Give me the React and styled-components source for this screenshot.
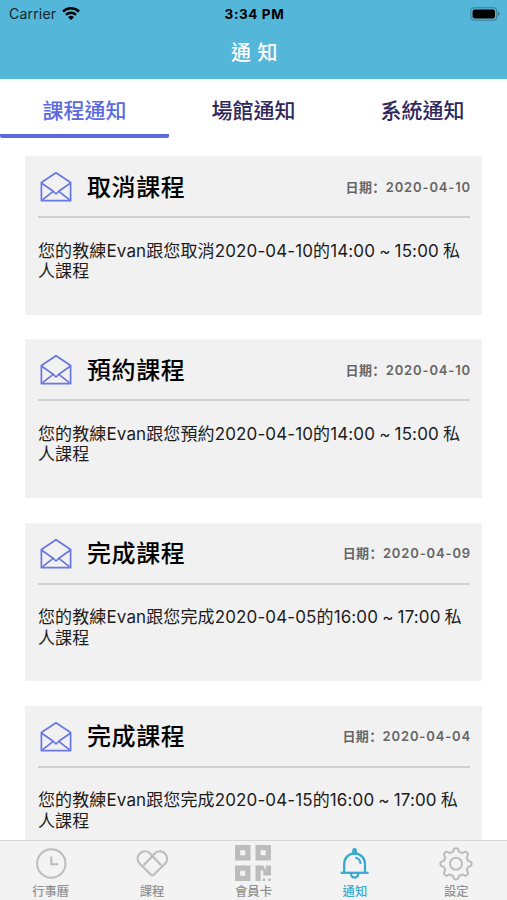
import styled, { createGlobalStyle } from "styled-components"

const GlobalStyle = createGlobalStyle`
  * {
    box-sizing: border-box;
  }

  body {
    margin: 0;
    background: #fff;
    font-family: Inter, "Noto Sans CJK TC", sans-serif;
  }
`;

const Screen = styled.div`
  display: flex;
  flex-direction: column;
  width: 507px;
  height: 900px;
  overflow: hidden;
`;

const Header = styled.header`
  flex: none;
  height: 79px;
  background: #54b6d9;
`;

const StatusBar = styled.div`
  display: grid;
  grid-template-columns: 1fr auto 1fr;
  align-items: center;
  height: 27px;
  padding: 0 7px 0 9px;
  color: #000;
`;

const Carrier = styled.div`
  display: flex;
  align-items: center;
  gap: 6px;
  font-size: 14px;
  letter-spacing: 0.2px;
  color: #12242b;
`;

const Clock = styled.div`
  font-size: 13.5px;
  font-weight: 700;
  letter-spacing: 0.6px;
`;

const BatteryIcon = styled.svg`
  justify-self: end;
`;

const Title = styled.h1`
  margin: 0;
  padding: 1px 0 0 2px;
  font-size: 20px;
  font-weight: 500;
  line-height: 50px;
  letter-spacing: 0.6px;
  text-align: center;
  color: #fff;
`;

const Tabs = styled.nav`
  display: grid;
  flex: none;
  grid-template-columns: repeat(3, 1fr);
  height: 59px;
`;

const Tab = styled.button`
  height: 59px;
  padding: 8px 0 0;
  border: 0;
  border-bottom: 4px solid ${({ active }) => (active ? "#5b6bdf" : "transparent")};
  border-radius: 2px;
  background: none;
  font-family: inherit;
  font-size: 21px;
  font-weight: 500;
  line-height: 47px;
  color: ${({ active }) => (active ? "#5b6bdf" : "#30285c")};
`;

const List = styled.main`
  display: flex;
  flex: 1;
  flex-direction: column;
  gap: 24.6px;
  min-height: 0;
  padding: 18px 25px 0;
  overflow: hidden;
`;

const Card = styled.article`
  flex: none;
  height: 158.7px;
  padding: 0 12px 0 13px;
  border-radius: 1px;
  background: #f1f1f1;
`;

const CardHeader = styled.div`
  display: flex;
  align-items: center;
  height: 62px;
  padding-left: 1px;
  border-bottom: 2px solid #cfcfcf;
`;

const CardTitle = styled.h2`
  flex: 1;
  margin: 0 0 0 14px;
  padding-top: 3px;
  font-size: 24px;
  font-weight: 500;
  line-height: 34px;
  letter-spacing: 0.6px;
  color: #000;
`;

const CardDate = styled.time`
  margin-right: -1px;
  font-size: 13px;
  font-weight: 600;
  letter-spacing: 0.85px;
  color: #666;
`;

const DateLabel = styled.span`
  font-family: "Noto Sans CJK SC", sans-serif;
  letter-spacing: 0.4px;
`;

const Message = styled.p`
  margin: 22.5px 0 0;
  font-size: 17px;
  line-height: 20.5px;
  letter-spacing: 0.12px;
  word-spacing: -0.8px;
  color: #1c1c1c;
`;

const TabBar = styled.footer`
  display: grid;
  flex: none;
  grid-template-columns: repeat(5, 1fr);
  height: 60px;
  border-top: 1px solid #d6d6d6;
  background: #f3f3f3;
`;

const TabBarItem = styled.div`
  display: flex;
  flex-direction: column;
  align-items: center;
  padding-top: 4px;
  font-size: 12.3px;
  font-weight: 500;
  line-height: 16px;
  color: ${({ active }) => (active ? "#3ca9cf" : "#929292")};

  svg {
    display: block;
    margin-bottom: 0.5px;
    color: ${({ active }) => (active ? "#3ca9cf" : "#bcbcbc")};
  }
`;

const WifiIcon = () => (
  <svg width="18" height="14" viewBox="0 0 18 14" fill="none" stroke="#000" strokeWidth="2.5">
    <path d="M1 4.6a11.4 11.4 0 0 1 16 0" />
    <path d="M4 7.9a7.1 7.1 0 0 1 10 0" />
    <path d="M9 13.1 6.1 10.2a4.1 4.1 0 0 1 5.8 0Z" fill="#000" stroke="none" />
  </svg>
);

const Battery = () => (
  <BatteryIcon width="30" height="14" viewBox="0 0 30 14">
    <rect x="0.8" y="0.8" width="26" height="12.4" rx="3.5" fill="none" stroke="#3e7f95" strokeWidth="1.1" />
    <rect x="2.6" y="2.6" width="22.4" height="8.8" rx="1.8" />
    <path d="M28 4.8c2.2.7 2.2 3.7 0 4.4Z" fill="#3e7f95" />
  </BatteryIcon>
);

const MailIcon = () => (
  <svg width="34" height="32" viewBox="0 0 34 32" fill="none" stroke="#6878e2" strokeWidth="1.7" strokeLinejoin="round">
    <path d="M2.4 12.5 17 2.8l14.6 9.7v18.2H2.4Z" />
    <path d="m2.4 13 11.8 8.3L17 24l2.8-2.7L31.6 13M2.4 30.7l11.8-9.4M31.6 30.7l-11.8-9.4" />
  </svg>
);

const ClockIcon = () => (
  <svg width="38" height="38" viewBox="0 0 38 38" fill="none" stroke="currentColor" strokeWidth="2">
    <circle cx="19.3" cy="18.5" r="14.2" />
    <path d="M19.3 11.5v7.7h6.8" />
  </svg>
);

const HeartIcon = () => (
  <svg width="38" height="38" viewBox="0 0 38 38" fill="none" stroke="currentColor" strokeWidth="2.1" strokeLinejoin="round">
    <path d="M19.4 31 6 18A7.4 7.4 0 0 1 16.3 7.7l11.9 12.6" />
    <path d="M10.6 20.3 22.5 7.7A7.4 7.4 0 0 1 32.8 18L19.4 31" />
  </svg>
);

const CardIcon = () => (
  <svg width="38" height="38" viewBox="0 0 38 38" fill="currentColor" fillRule="evenodd">
    <path d="M1 0h15.5v15.5H1Zm5.2 5.2v5.1h5.1V5.2Z" />
    <path d="M21.5 0H37v15.5H21.5Zm5.2 5.2v5.1h5.1V5.2Z" />
    <path d="M1 20.5h15.5V36H1Zm5.2 5.2v5.1h5.1v-5.1Z" />
    <path d="M21.5 20.5h7.8l2.5 5v-5H37v10h-7.8v-5h-2.5V36h-5.2ZM28.7 33.4h2.6V36h-2.6ZM34.2 33.4h2.6V36h-2.6Z" />
  </svg>
);

const BellIcon = () => (
  <svg width="38" height="38" viewBox="0 0 38 38" fill="none" stroke="currentColor" strokeWidth="2.3">
    <path d="M4.6 27.8h28" />
    <path d="M8.2 27.5V18.7a10.4 10.4 0 0 1 20.8 0v8.8" />
    <path d="M16.9 9V5.3a1.7 1.7 0 0 1 3.4 0V9Z" fill="currentColor" strokeWidth="1.4" />
    <path d="M14.9 28c0 6 7.4 6 7.4 0" />
    <path d="M19.2 12.8c3.4.4 5.2 2.8 5.4 6.2" strokeWidth="2" />
  </svg>
);

const GearIcon = () => (
  <svg width="38" height="38" viewBox="0 0 38 38" fill="none" stroke="currentColor" strokeWidth="2" strokeLinejoin="round">
    <path d="M15.9 6.9C16.7 3.8 17 3.2 19 3.2s2.3.6 3.1 3.7q1.8.5 3.2 1.3c2.8-1.7 3.4-1.9 4.8-.5s1.2 2-.5 4.8q.8 1.4 1.3 3.2c3.1.8 3.7 1.1 3.7 3.1s-.6 2.3-3.7 3.1q-.5 1.8-1.3 3.2c1.7 2.8 1.9 3.4.5 4.8s-2 1.2-4.8-.5q-1.4.8-3.2 1.3c-.8 3.1-1.1 3.7-3.1 3.7s-2.3-.6-3.1-3.7q-1.8-.5-3.2-1.3c-2.8 1.7-3.4 1.9-4.8.5s-1.2-2 .5-4.8q-.8-1.4-1.3-3.2C4 21.1 3.4 20.8 3.4 18.8s.6-2.3 3.7-3.1q.5-1.8 1.3-3.2c-1.7-2.8-1.9-3.4-.5-4.8s2-1.2 4.8.5q1.4-.8 3.2-1.3Z" />
    <circle cx="19" cy="18.7" r="6" />
  </svg>
);

const tabs = ["課程通知", "場館通知", "系統通知"];

const notices = [
  { title: "取消課程", date: "2020-04-10", message: "您的教練Evan跟您取消2020-04-10的14:00 ~ 15:00 私人課程" },
  { title: "預約課程", date: "2020-04-10", message: "您的教練Evan跟您預約2020-04-10的14:00 ~ 15:00 私人課程" },
  { title: "完成課程", date: "2020-04-09", message: "您的教練Evan跟您完成2020-04-05的16:00 ~ 17:00 私人課程" },
  { title: "完成課程", date: "2020-04-04", message: "您的教練Evan跟您完成2020-04-15的16:00 ~ 17:00 私人課程" },
];

const menu = [
  { label: "行事曆", Icon: ClockIcon },
  { label: "課程", Icon: HeartIcon },
  { label: "會員卡", Icon: CardIcon },
  { label: "通知", Icon: BellIcon },
  { label: "設定", Icon: GearIcon },
];

export default function App() {
  return (
    <Screen lang="zh-Hant">
      <GlobalStyle />
      <Header>
        <StatusBar>
          <Carrier>
            Carrier
            <WifiIcon />
          </Carrier>
          <Clock>3:34 PM</Clock>
          <Battery />
        </StatusBar>
        <Title>通 知</Title>
      </Header>
      <Tabs>
        {tabs.map((tab, index) => (
          <Tab key={tab} active={index === 0 ? 1 : 0}>{tab}</Tab>
        ))}
      </Tabs>
      <List>
        {notices.map(({ title, date, message }, index) => (
          <Card key={index}>
            <CardHeader>
              <MailIcon />
              <CardTitle>{title}</CardTitle>
              <CardDate>
                <DateLabel lang="zh-Hans">日期：</DateLabel>
                {date}
              </CardDate>
            </CardHeader>
            <Message>{message}</Message>
          </Card>
        ))}
      </List>
      <TabBar>
        {menu.map(({ label, Icon }) => (
          <TabBarItem key={label} active={label === "通知" ? 1 : 0}>
            <Icon />
            {label}
          </TabBarItem>
        ))}
      </TabBar>
    </Screen>
  )
}
